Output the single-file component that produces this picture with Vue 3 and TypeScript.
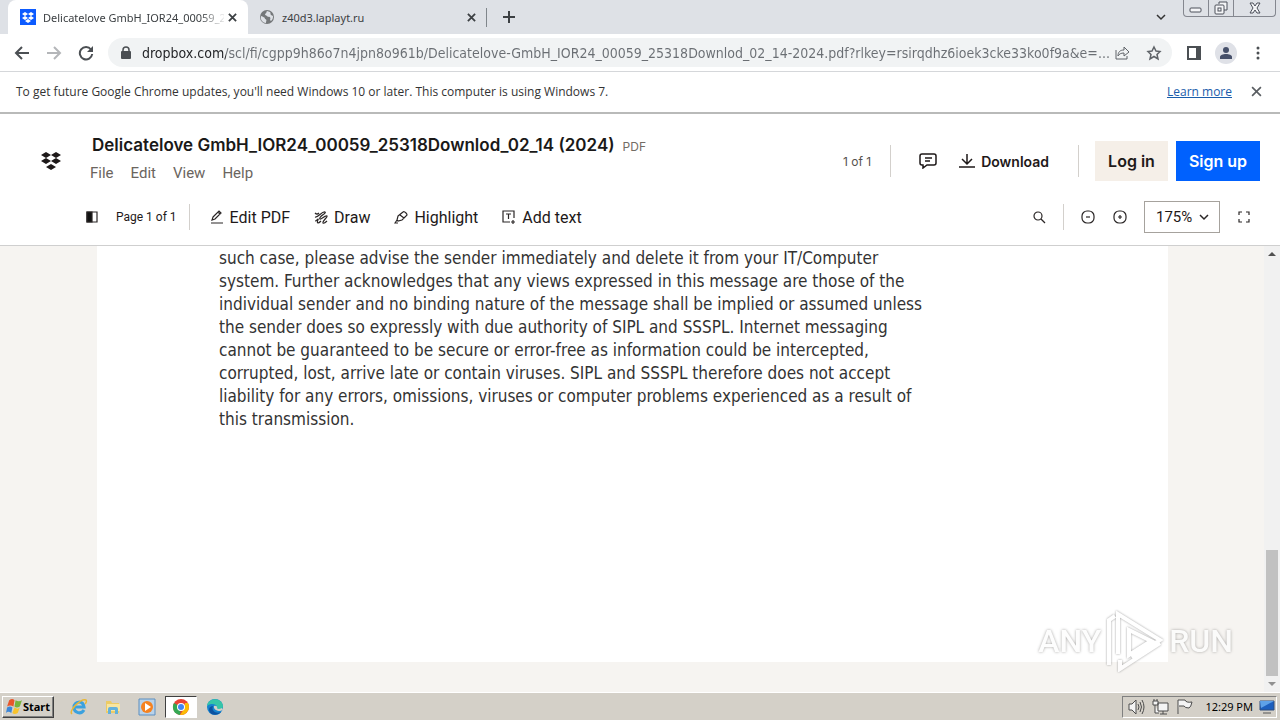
<script setup lang="ts">
import { ref } from 'vue'

const address = ref(
  'dropbox.com/scl/fi/cgpp9h86o7n4jpn8o961b/Delicatelove-GmbH_IOR24_00059_25318Downlod_02_14-2024.pdf?rlkey=rsirqdhz6ioek3cke33ko0f9a&e=...',
)
const zoom = ref('175%')
const menus: string[] = ['File', 'Edit', 'View', 'Help']
const lines: string[] = [
  'such case, please advise the sender immediately and delete it from your IT/Computer',
  'system. Further acknowledges that any views expressed in this message are those of the',
  'individual sender and no binding nature of the message shall be implied or assumed unless',
  'the sender does so expressly with due authority of SIPL and SSSPL. Internet messaging',
  'cannot be guaranteed to be secure or error-free as information could be intercepted,',
  'corrupted, lost, arrive late or contain viruses. SIPL and SSSPL therefore does not accept',
  'liability for any errors, omissions, viruses or computer problems experienced as a result of',
  'this transmission.',
]
</script>

<template>
  <div class="screen">
    <header class="tabs">
      <div class="tab active">
        <svg class="fav" viewBox="0 0 16 16"><rect width="16" height="16" fill="#0d5bff" /><path fill="#fff" d="M5 3 8 5 5 7 2 5zM11 3l3 2-3 2-3-2zM5 7l3 2-3 2-3-2zM11 7l3 2-3 2-3-2zM8 10l3 2-3 2-3-2z" /></svg>
        <button class="tab-title fade">Delicatelove GmbH_IOR24_00059_2</button>
        <button class="x" aria-label="Close tab"><svg viewBox="0 0 10 10"><path d="m1 1 8 8M9 1 1 9" /></svg></button>
      </div>
      <div class="tab idle">
        <svg class="fav" viewBox="0 0 16 16"><circle cx="8" cy="8" r="7" fill="#747779" /><path fill="#dee1e6" d="M2 7c2 1 4 1 4 3 1 0 2 1 1 3v1C4 14 1 11 2 7zM8 2c-1 1 0 2-2 3 0 2 2 1 3 3 2-1 3 1 2 3l1 1c2-2 2-3 2-5l-2-1c-1-1 0-2-1-3z" /></svg>
        <button class="tab-title">z40d3.laplayt.ru</button>
        <button class="x" aria-label="Close tab"><svg viewBox="0 0 10 10"><path d="m1 1 8 8M9 1 1 9" /></svg></button>
      </div>
      <button class="new" aria-label="New tab"><svg viewBox="0 0 12 12"><path d="M6 0v12M0 6h12" /></svg></button>
      <button class="search-tabs" aria-label="Search tabs"><svg viewBox="0 0 12 8"><path d="m2 2 4 4 4-4" /></svg></button>
      <div class="win">
        <button aria-label="Minimize"><svg width="14" height="16" viewBox="0 0 14 16"><rect x="1" y="8" width="11" height="4" rx="1" /></svg></button>
        <button aria-label="Restore"><svg width="14" height="16" viewBox="0 0 14 16"><path d="M5 4V2h8v8h-3" /><rect x="1" y="5" width="9" height="9" rx="1" /><rect x="4" y="8" width="3" height="3" /></svg></button>
        <button class="wide" aria-label="Close"><svg width="14" height="16" viewBox="0 0 14 16"><path d="M2 3h3l2 3 2-3h3L9 8l3 5H9l-2-3-2 3H2l3-5z" /></svg></button>
      </div>
    </header>

    <div class="toolbar">
      <button class="nav" aria-label="Back"><svg viewBox="0 0 16 16"><path d="M15 8H2M8 2 2 8l6 6" /></svg></button>
      <button class="nav off" aria-label="Forward"><svg viewBox="0 0 16 16"><path d="M1 8h13M8 2l6 6-6 6" /></svg></button>
      <button class="nav" aria-label="Reload"><svg viewBox="0 0 16 16"><path d="M13 4.500A6.200 6.200 0 1 0 14.200 9" /><path class="solid" d="M15 1v6H9z" /></svg></button>
      <div class="pill">
        <svg class="lock" viewBox="0 0 10 14"><rect y="5" width="10" height="8" rx="1" fill="#4b4f53" /><path d="M2 6V4a3 3 0 0 1 6 0v2" fill="none" stroke="#4b4f53" stroke-width="1.500" /></svg>
        <input v-model="address" aria-label="Address" />
        <button class="act" aria-label="Share"><svg viewBox="0 0 16 16"><path d="M2 5v9h11v-3M4 11c0-4 2-6 6-6V2l5 5-5 4V8c-3 0-5 1-6 3z" /></svg></button>
        <button class="act star" aria-label="Bookmark"><svg viewBox="0 0 16 16"><path d="m8 2 2 4 4 .5-3 3 1 4.500-4-2.500L4 14l1-4.500-3-3L6 6z" /></svg></button>
      </div>
      <button class="side" aria-label="Side panel"><svg viewBox="0 0 14 14"><path fill="none" stroke="#4b4f53" stroke-width="2" d="M1 1h12v12H1z" /><path fill="#4b4f53" d="M9 0h5v14H9z" /></svg></button>
      <button class="user" aria-label="Profile"><svg viewBox="0 0 22 22"><circle cx="11" cy="11" r="11" fill="#dfe1e7" /><circle cx="11" cy="8" r="3" fill="#46506a" /><path fill="#46506a" d="M5 17v-2c0-4 12-4 12 0v2z" /></svg></button>
      <button class="more" aria-label="Menu"><svg viewBox="0 0 4 14"><circle cx="2" cy="2" r="1.500" /><circle cx="2" cy="7" r="1.500" /><circle cx="2" cy="12" r="1.500" /></svg></button>
    </div>

    <div class="notice">
      <span>To get future Google Chrome updates, you'll need Windows 10 or later. This computer is using Windows 7.</span>
      <a href="#">Learn more</a>
      <button class="x big" aria-label="Dismiss"><svg viewBox="0 0 10 10"><path d="m1 1 8 8M9 1 1 9" /></svg></button>
    </div>

    <section class="head">
      <svg class="logo" viewBox="0 0 22 20"><path d="m6 1 5 3-5 3-5-3zM16 1l5 3-5 3-5-3zM6 7l5 3-5 3-5-3zM16 7l5 3-5 3-5-3zM11 13l5 3-5 3-5-3z" /></svg>
      <div class="file">
        <div class="name"><h1>Delicatelove GmbH_IOR24_00059_25318Downlod_02_14 (2024)</h1><span>PDF</span></div>
        <nav><button v-for="m in menus" :key="m">{{ m }}</button></nav>
      </div>
      <span class="count">1 of 1</span>
      <i class="rule r1"></i>
      <button class="comment" aria-label="Comments"><svg viewBox="0 0 18 16"><path d="M3 1h12q2 0 2 2v7q0 2-2 2H8l-4 3v-3H3q-2 0-2-2V3q0-2 2-2zM6 5h7M6 8h5" /></svg></button>
      <button class="download"><svg viewBox="0 0 16 16"><path d="M8 1v9M3 6l5 5 5-5M0 14h16" /></svg>Download</button>
      <i class="rule r2"></i>
      <button class="login">Log in</button>
      <button class="signup">Sign up</button>
    </section>

    <section class="tools">
      <button class="panel" aria-label="Thumbnails"><svg viewBox="0 0 14 14"><path d="M2 2h10v10H2z" /><path d="M2 2h5v10H2z" fill="#111" /></svg></button>
      <span class="pageno">Page 1 of 1</span>
      <i class="rule"></i>
      <button class="tool first"><svg viewBox="0 0 14 14"><path d="m3 7 6-6 2 2-6 6-3 1zM8 2l2 2M1 13h12" /></svg>Edit PDF</button>
      <button class="tool"><svg viewBox="0 0 14 14"><path d="M1 3q2 2 4 0M1 7c3 1 7-6 10-5 2 1-7 5-5 7 1 1 5-4 7-3 1 1-5 5-4 7 1 1 3-1 4-2M1 11c2 0 2-2 3-2s-2 3 0 4q1 0 3-2" /></svg>Draw</button>
      <button class="tool"><svg viewBox="0 0 14 14"><path d="m4 6 5-4q1-1 3 1t0 3L8 10l-4 1-1-1zM3 10l-2 3h3M6 5l4 3" /></svg>Highlight</button>
      <button class="tool"><svg viewBox="0 0 14 14"><path d="M8 12H1V1h11v7M4 4h5M6.500 4v5M11 10v4M9 12h4" /></svg>Add text</button>
      <button class="find" aria-label="Find"><svg viewBox="0 0 14 14"><circle cx="6" cy="6" r="4" /><path d="m9 9 4 4" /></svg></button>
      <i class="rule"></i>
      <button class="out" aria-label="Zoom out"><svg viewBox="0 0 14 14"><rect x="1" y="1" width="12" height="12" rx="5" /><path d="M5 7h4" /></svg></button>
      <button class="in" aria-label="Zoom in"><svg viewBox="0 0 14 14"><rect x="1" y="1" width="12" height="12" rx="5" /><path d="M5 7h4M7 5v4" /></svg></button>
      <div class="select">
        <select v-model="zoom" aria-label="Zoom level"><option>175%</option><option>100%</option></select>
        <svg viewBox="0 0 12 8"><path d="m2 2 4 4 4-4" /></svg>
      </div>
      <button aria-label="Full screen"><svg viewBox="0 0 14 14"><path d="M5 2H2v3M9 2h3v3M5 12H2V9M9 12h3V9" /></svg></button>
    </section>

    <main class="viewer">
      <article class="page">
        <p><template v-for="l in lines" :key="l">{{ l }}<br /></template></p>
      </article>
      <div class="scroll">
        <button aria-label="Scroll up"><svg viewBox="0 0 8 4"><path fill="#505050" d="m0 4 4-4 4 4z" /></svg></button>
        <div class="thumb"></div>
        <button aria-label="Scroll down"><svg viewBox="0 0 8 4"><path fill="#909090" d="m0 0 4 4 4-4z" /></svg></button>
      </div>
      <div class="mark">
        <span>ANY</span>
        <svg viewBox="0 0 58 62"><path d="M3 55V10l6-4M12 44V4l42 26-28 18M14 50v9l40-26M23 20v25l22-14z" /></svg>
        <span>RUN</span>
      </div>
    </main>

    <footer class="taskbar">
      <button class="start"><svg viewBox="0 0 16 14"><path fill="#e8562a" d="M3 1q3-2 5 0L7 7Q4 5 1 7z" /><path fill="#76b43c" d="M9 1q3 2 6 0l-2 6q-3 2-5 0z" /><path fill="#3c86d8" d="M1 8q3-2 5 0l-1 5q-3-2-5 0z" /><path fill="#f8c32c" d="M8 8q3 2 5 0l-2 5q-3 2-5 0z" /></svg>Start</button>
      <button class="app" aria-label="Internet Explorer"><svg viewBox="0 0 18 18"><path d="M14 12c-3 5-10 3-10-3s9-7 10 0H5" fill="none" stroke="#3ba1de" stroke-width="3" /><path d="M2 16C-2 13 11 0 16 2c1 1 0 3-1 4" fill="none" stroke="#e9b735" stroke-width="1.500" /></svg></button>
      <button class="app" aria-label="Explorer"><svg viewBox="0 0 18 18"><path d="M2 3h5l1 2h7v10H2z" fill="#eccb66" /><path d="M3 6h13v7H3z" fill="#f8e5a0" /><path d="M4 16v-5q0-2 2-2h6q2 0 2 2v5h-3v-4H7v4z" fill="#63b1dc" /></svg></button>
      <button class="app" aria-label="Media Player"><svg viewBox="0 0 18 18"><path d="M1 1h16v16H1z" fill="#b9d2e9" stroke="#5c8fc0" /><circle cx="9" cy="9" r="6" fill="#f58220" /><path d="m7 5 6 4-6 4z" fill="#fff" /></svg></button>
      <button class="app on" aria-label="Chrome"><svg viewBox="0 0 18 18"><circle cx="9" cy="9" r="8" fill="#ea4335" /><path d="M9 9 2 5a8 8 0 0 0 6 12z" fill="#34a853" /><path d="M9 9h8a8 8 0 0 1-9 8l4-6 1-6h3q1 2 1 4z" fill="#fbbc04" /><circle cx="9" cy="9" r="4" fill="#fff" /><circle cx="9" cy="9" r="3" fill="#4285f4" /></svg></button>
      <button class="app" aria-label="Edge"><svg viewBox="0 0 18 18"><circle cx="9" cy="9" r="8" fill="#1583cf" /><path d="M1 8C2-1 16-1 17 8c0 4-5 4-6 2 1-3-5-6-10-2z" fill="#36c5a8" /><path d="M7 8c-2 5 3 8 8 6-3 4-11 4-12-2 0-3 2-4 4-4z" fill="#0d52a0" /><path d="M8 8c-1 3 3 5 6 5l3-1-1-2q-4 2-5 0c1-1-1-3-3-2z" fill="#d4d0c8" /></svg></button>
      <div class="tray">
        <svg viewBox="0 0 18 16"><path d="M1 5h3l4-4v14l-4-4H1z" /><path fill="none" d="M10 5q2 3 0 6M12 3q3 5 0 10M14 1q4 7 0 14" /></svg>
        <svg viewBox="0 0 18 16"><path d="M6 4h10v8H6zM8 15h7M11 12v3M1 2h5v4H1zM2 0v2M5 0v2M3 6v8h4" /></svg>
        <svg viewBox="0 0 18 16"><path d="M2 15V1h7q1 3 7 2-1 5-3 6-4 0-5-2H3" /></svg>
        <time>12:29 PM</time>
        <svg class="desk" viewBox="0 0 16 14"><path d="M1 1h14v9H1z" fill="#1d5fbe" stroke="#304f7c" /><path d="M1 1h14L2 8z" fill="#5ea1e8" stroke="none" /><path d="M4 13h8" stroke="#555" /></svg>
      </div>
    </footer>
  </div>
</template>

<style>
body { margin: 0; }
</style>

<style scoped>
.screen { min-height: 100vh; display: flex; flex-direction: column; background: #fff; color: #1e1919; font-family: "Noto Sans", sans-serif; font-size: 11px; overflow: hidden; }
.screen * { box-sizing: border-box; }
button { border: 0; padding: 0; margin: 0; background: none; font: inherit; color: inherit; display: flex; align-items: center; justify-content: center; flex: none; white-space: nowrap; }
svg { display: block; flex: none; fill: none; stroke: none; }
.tabs { height: 34px; background: #dee1e6; display: flex; align-items: center; padding-left: 8px; }
.tab { height: 34px; display: flex; align-items: center; width: 240px; padding: 0 8px 0 12px; color: #3c4043; }
.tab.active { background: #fff; border-radius: 8px 8px 0 0; }
.tab.idle { width: 239px; padding-left: 11px; position: relative; }
.tab.idle::after { content: ""; position: absolute; right: 0; top: 8px; height: 19px; border-right: 1px solid #80868b; }
.fav { width: 16px; height: 16px; margin-right: 7px; }
.tab-title { flex: 1; min-width: 0; justify-content: flex-start; }
.fade { mask-image: linear-gradient(to right, #000 156px, transparent 184px); }
.x { width: 16px; height: 16px; }
.x svg { width: 9px; height: 9px; stroke: #3c4043; stroke-width: 2; }
.notice .big svg { width: 11px; height: 11px; stroke: #5a5e62; stroke-width: 1.500; }
.new { width: 44px; height: 34px; }
.new svg { width: 12px; height: 12px; stroke: #3c4043; stroke-width: 2; }
.search-tabs { margin-left: auto; margin-right: 16px; }
.search-tabs svg, .select svg { width: 12px; height: 8px; stroke: #333; stroke-width: 1.500; }
.win { display: flex; align-self: flex-start; height: 17px; border: 1px solid #84878f; border-top: 0; border-radius: 0 0 4px 4px; margin-right: 4px; }
.win button { width: 25px; border-right: 1px solid #84878f; }
.win .wide { width: 41px; border: 0; }
.win svg { stroke: #4c505a; fill: #f4f5f7; }
.toolbar { height: 38px; border-bottom: 1px solid #d5d7da; display: flex; align-items: center; padding-left: 14px; }
.nav { width: 16px; margin-right: 16px; }
.nav svg { width: 16px; height: 16px; stroke: #4b4f53; stroke-width: 2; }
.nav.off svg { stroke: #b4b6b9; }
.nav .solid { fill: #4b4f53; stroke: none; }
.pill { flex: 1; min-width: 0; height: 29px; background: #f1f3f4; border-radius: 15px; display: flex; align-items: center; padding: 0 10px 0 13px; margin-left: -2px; }
.lock { width: 10px; height: 14px; margin-right: 11px; }
.pill input { flex: 1; min-width: 0; border: 0; padding: 0; outline: 0; font: 14px/20px "DejaVu Sans Condensed", "DejaVu Sans", sans-serif; color: transparent; background: linear-gradient(to right, #202124 84px, #6a6e73 84px); background-clip: text; -webkit-background-clip: text; }
.act { margin-left: 2px; }
.act svg { width: 16px; height: 16px; stroke: #5f6368; }
.act.star { margin-left: 16px; }
.act.star svg { stroke-width: 1.500; }
.side { margin-left: 15px; }
.side svg { width: 14px; height: 14px; }
.user { margin-left: 14px; }
.user svg { width: 22px; height: 22px; }
.more { margin: 0 20px 0 19px; }
.more svg { width: 4px; height: 14px; fill: #4b4f53; }
.notice { height: 42px; border-bottom: 2px solid #b9bab9; display: flex; align-items: center; padding: 0 16px 2px; color: #333; font-family: "Open Sans", sans-serif; font-size: 12px; }
.notice a { margin-left: auto; margin-right: 16px; color: #1a5dab; }
.head { height: 87px; display: flex; align-items: center; padding: 7px 20px 0 40px; font-family: Inter, sans-serif; }
.logo { width: 22px; height: 20px; fill: #1e1919; margin-right: 28px; }
.file { flex: 1; min-width: 0; padding-bottom: 6px; }
.name { display: flex; align-items: baseline; height: 24px; padding-left: 2px; white-space: nowrap; }
h1 { font-size: 17px; line-height: 24px; font-weight: 600; margin: 0; color: #1a1918; }
.name span { font-size: 12px; color: #736c64; margin-left: 8px; }
nav { display: flex; gap: 17px; margin-top: 6px; font-size: 15px; line-height: 20px; color: #6b655e; font-family: Roboto, sans-serif; }
.count { font-size: 12px; color: #56524d; }
.rule { width: 1px; height: 26px; background: #d3d0cc; flex: none; }
.r1, .r2 { height: 32px; }
.r1 { margin: 0 28px 0 19px; }
.comment { margin-right: 22px; }
.comment svg { width: 18px; height: 16px; stroke: #1e1919; stroke-width: 1.500; }
.download { font-size: 14px; font-weight: 600; gap: 6px; }
.download svg { width: 16px; height: 16px; stroke: #1e1919; stroke-width: 1.500; }
.r2 { margin: 0 16px 0 29px; }
.login, .signup { height: 40px; padding: 0 12px; font-size: 16px; font-weight: 600; }
.login { width: 73px; background: #f5efe8; margin-right: 8px; }
.signup { width: 84px; background: #0061fe; color: #fff; }
.tools { height: 45px; border-bottom: 1px solid #cfcfcf; display: flex; align-items: center; padding: 0 29px 12px 85px; font-family: Roboto, sans-serif; font-size: 16px; }
.tools svg { width: 14px; height: 14px; stroke: #2a2626; stroke-width: 1.200; }
.panel { margin-right: 17px; }
.pageno { font-size: 12px; margin-right: 12px; }
.tool { gap: 6px; margin-left: 24px; }
.tool.first { margin-left: 20px; }
.find { margin-left: auto; margin-right: 17px; }
.out { margin: 0 18px 0 17px; }
.in { margin-right: 17px; }
.select { position: relative; margin-right: 17px; }
.select select { appearance: none; width: 76px; height: 32px; border: 1px solid #a6a29d; border-radius: 0; background: #fff; padding: 0 11px; font: 15px Roboto, sans-serif; color: #1e1919; }
.tools .select svg { position: absolute; right: 10px; top: 12px; width: 12px; height: 8px; stroke-width: 1.500; pointer-events: none; }
.viewer { flex: 1; display: flex; background: #f6f4f1; position: relative; }
.page { flex: 1; background: #fff; margin: 0 96px 30px 97px; padding: 1px 122px 0; }
.page p { margin: 0; font-family: "DejaVu Sans Condensed", "DejaVu Sans", sans-serif; font-size: 17px; line-height: 23px; color: #333; white-space: nowrap; }
.scroll { width: 16px; background: #f1f1f1; display: flex; flex-direction: column; }
.scroll button { height: 16px; }
.scroll svg { width: 8px; height: 4px; }
.thumb { background: #c1c1c1; height: 126px; margin: auto 2px 0; }
.mark { position: absolute; right: 47px; bottom: 20px; height: 62px; display: flex; align-items: center; gap: 5px; font: 500 32px Roboto, sans-serif; color: #fdfdfd; text-shadow: 0 0 3px #8e8c8a; opacity: .8; }
.mark svg { width: 58px; height: 62px; stroke: #fff; stroke-width: 4; filter: drop-shadow(0 0 1px #888); }
.taskbar { height: 28px; background: #d4d0c8; box-shadow: inset 0 1px #fff; display: flex; align-items: center; padding: 2px 3px 1px 2px; }
.start { height: 22px; width: 52px; font-weight: 700; color: #000; border: 1px solid; border-color: #fff #404040 #404040 #fff; box-shadow: inset -1px -1px #808080; margin-right: 9px; }
.start svg { width: 17px; height: 15px; }
.app { width: 32px; height: 22px; margin-right: 2px; }
.app svg { width: 18px; height: 18px; }
.app.on { background: #fff; border: 1px solid; border-color: #404040 #fff #fff #404040; }
.tray { margin-left: auto; height: 22px; border: 1px solid; border-color: #808080 #fff #fff #808080; display: flex; align-items: center; padding: 0 1px 0 5px; color: #000; gap: 6px; }
.tray svg { width: 18px; height: 16px; stroke: #4c4c4c; fill: #f4f4f4; }
.tray time { margin-left: 5px; }
.tray .desk { width: 16px; height: 14px; }
</style>
